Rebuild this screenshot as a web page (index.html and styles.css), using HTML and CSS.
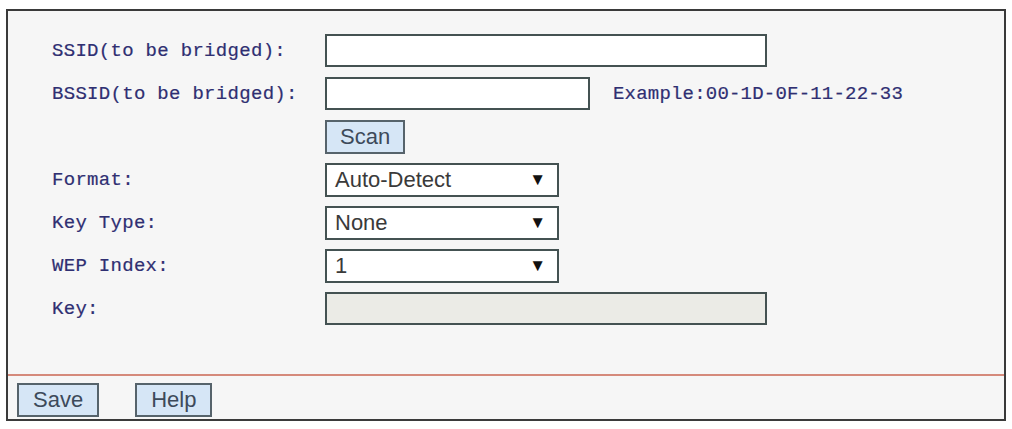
FILE: index.html
```html
<!DOCTYPE html>
<html lang="en">
<head>
  <meta charset="UTF-8" />
  <title>Wireless Bridge</title>
  <link rel="stylesheet" href="styles.css">
</head>
<body>
  <div class="panel">
    <div class="form">
      <div class="label">SSID(to be bridged):</div>
      <div class="field"><div class="input wide"></div></div>

      <div class="label">BSSID(to be bridged):</div>
      <div class="field">
        <div class="input mid"></div>
        <span class="hint">Example:00-1D-0F-11-22-33</span>
      </div>

      <div class="label"></div>
      <div class="field"><button class="btn">Scan</button></div>

      <div class="label">Format:</div>
      <div class="field"><div class="select"><span>Auto-Detect</span><span class="arrow">▼</span></div></div>

      <div class="label">Key Type:</div>
      <div class="field"><div class="select"><span>None</span><span class="arrow">▼</span></div></div>

      <div class="label">WEP Index:</div>
      <div class="field"><div class="select"><span>1</span><span class="arrow">▼</span></div></div>

      <div class="label">Key:</div>
      <div class="field"><div class="input wide disabled"></div></div>
    </div>
    <div class="footer">
      <button class="btn">Save</button>
      <button class="btn">Help</button>
    </div>
  </div>
</body>
</html>
```

FILE: styles.css
```css
body {
  margin: 0;
  background: #ffffff;
  font-family: "Liberation Sans", Arial, sans-serif;
}
.panel {
  margin: 9px 0 0 6px;
  width: 996px;
  height: 408px;
  border: 2px solid #3a3a3a;
  background: #f6f6f6;
  display: flex;
  flex-direction: column;
}
.form {
  height: 363px;
  box-sizing: border-box;
  padding: 23px 0 0 44px;
  display: grid;
  grid-template-columns: 273px auto;
  grid-auto-rows: 33px;
  row-gap: 10px;
  align-content: start;
}
.label {
  font-family: "Liberation Mono", "Courier New", monospace;
  font-size: 19px;
  letter-spacing: 0.3px;
  color: #2f2f72;
  display: flex;
  align-items: center;
  -webkit-text-stroke: 0.2px #2f2f72;
}
.field {
  display: flex;
  align-items: center;
}
.input {
  height: 33px;
  box-sizing: border-box;
  border: 2px solid #445252;
  background: #ffffff;
}
.input.wide {
  width: 442px;
}
.input.mid {
  width: 265px;
}
.input.disabled {
  background: #ebebe6;
}
.hint {
  margin-left: 23px;
  font-family: "Liberation Mono", "Courier New", monospace;
  font-size: 19px;
  letter-spacing: 0.2px;
  color: #2f2f72;
  -webkit-text-stroke: 0.2px #2f2f72;
}
.select {
  width: 234px;
  height: 34px;
  box-sizing: border-box;
  border: 2px solid #445252;
  background: #ffffff;
  display: flex;
  align-items: center;
  justify-content: space-between;
  padding: 0 11px 0 8px;
  font-size: 22px;
  color: #3a3a3a;
}
.arrow {
  font-size: 17px;
  color: #111111;
}
.btn {
  height: 34px;
  box-sizing: border-box;
  border: 2px solid #56636b;
  background: #d6e6f6;
  font-family: "Liberation Sans", Arial, sans-serif;
  font-size: 22px;
  color: #3d4a5a;
  padding: 0 13px;
}
.footer {
  border-top: 2px solid #d58a7b;
  padding: 7px 0 0 9px;
  display: flex;
  gap: 36px;
}
.footer .btn {
  padding: 0 14px;
}
```
